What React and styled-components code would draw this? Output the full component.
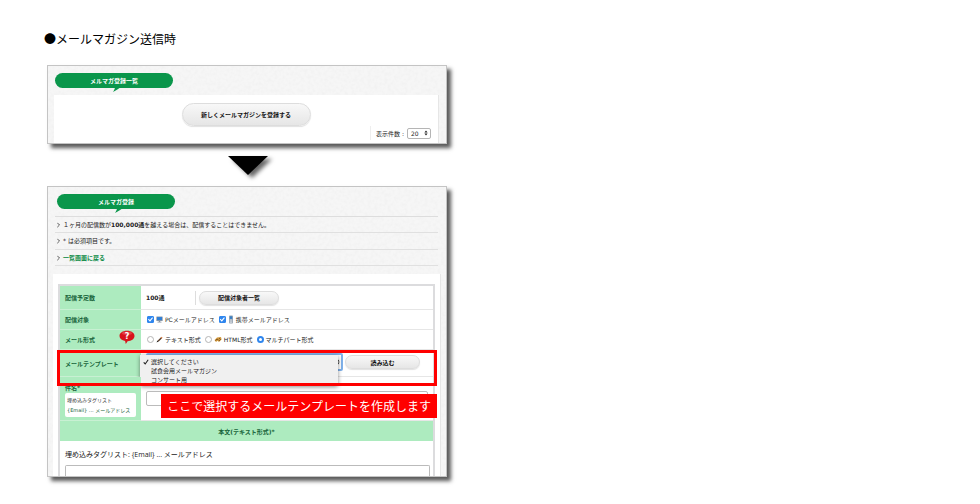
import React, { useState } from "react";
import styled, { createGlobalStyle } from "styled-components";

const menuItems = ["選択してください", "試食会用メールマガジン", "コンサート用"];

const App = () => {
  const [template, setTemplate] = useState(menuItems[0]);

  return (
    <Page>
      <GlobalStyle />
      <Title>●メールマガジン送信時</Title>

      <Panel>
        <Paper />
        <PanelBody>
          <Ribbon>
            メルマガ登録一覧
            <RibbonTail />
          </Ribbon>
          <ListCard>
            <Center>
              <PillButton size="large">
                新しくメールマガジンを登録する
              </PillButton>
            </Center>
            <PerPage>
              <label htmlFor="perPage">表示件数 :</label>
              <SelectWrapper>
                <SmallSelect id="perPage" defaultValue="20">
                  <option>20</option>
                  <option>50</option>
                </SmallSelect>
                <Stepper />
              </SelectWrapper>
            </PerPage>
          </ListCard>
        </PanelBody>
      </Panel>

      <DownArrow viewBox="0 0 40 19">
        <path d="M0 0h40L20 19z" />
      </DownArrow>

      <Panel>
        <Paper />
        <PanelBody>
          <Ribbon indent>
            メルマガ登録
            <RibbonTail />
          </Ribbon>
          <Notes>
            <Note>
              <Chevron />
              <span>
                １ヶ月の配信数が<b>100,000通</b>
                を越える場合は、配信することはできません。
              </span>
            </Note>
            <Note>
              <Chevron />
              <span>* は必須項目です。</span>
            </Note>
            <Note>
              <Chevron />
              <BackLink href="#list">一覧画面に戻る</BackLink>
            </Note>
          </Notes>

          <FormCard>
            <FormFrame>
              <FormTable>
                <tbody>
                  <Row height={24}>
                    <Head scope="row">配信予定数</Head>
                    <Cell>
                      <Line>
                        <Count>100通</Count>
                        <PillButton>配信対象者一覧</PillButton>
                      </Line>
                    </Cell>
                  </Row>
                  <Row height={20}>
                    <Head scope="row">配信対象</Head>
                    <Cell>
                      <Line>
                        <Choice>
                          <Checkbox type="checkbox" defaultChecked />
                          <MonitorIcon />
                          PCメールアドレス
                        </Choice>
                        <Choice>
                          <Checkbox type="checkbox" defaultChecked />
                          <PhoneIcon />
                          携帯メールアドレス
                        </Choice>
                      </Line>
                    </Cell>
                  </Row>
                  <Row height={20}>
                    <Head scope="row">
                      メール形式
                      <HelpIcon />
                    </Head>
                    <Cell>
                      <Line>
                        <Choice>
                          <Radio type="radio" name="format" />
                          <PencilIcon />
                          テキスト形式
                        </Choice>
                        <Choice>
                          <Radio type="radio" name="format" />
                          <HtmlIcon />
                          HTML形式
                        </Choice>
                        <Choice>
                          <Radio type="radio" name="format" defaultChecked />
                          マルチパート形式
                        </Choice>
                      </Line>
                    </Cell>
                  </Row>
                  <Row height={27}>
                    <Head scope="row">
                      <label htmlFor="template">メールテンプレート</label>
                    </Head>
                    <Cell>
                      <TemplateLine>
                        <SelectWrapper grow>
                          <TemplateSelect
                            id="template"
                            value={template}
                            onChange={(e) => setTemplate(e.target.value)}
                          >
                            {menuItems.map((item) => (
                              <option key={item}>{item}</option>
                            ))}
                          </TemplateSelect>
                          <Stepper />
                          <Menu>
                            {menuItems.map((item) => (
                              <MenuItem
                                key={item}
                                onClick={() => setTemplate(item)}
                              >
                                <Tick>{item === template && <TickIcon />}</Tick>
                                {item}
                              </MenuItem>
                            ))}
                          </Menu>
                        </SelectWrapper>
                        <PillButton size="medium">読み込む</PillButton>
                      </TemplateLine>
                      <Highlight />
                    </Cell>
                  </Row>
                  <Row height={44}>
                    <Head scope="row" top>
                      <label htmlFor="subject">件名*</label>
                      <TagBox>
                        <div>埋め込みタグリスト</div>
                        <TagName>{"{Email} ... メールアドレス"}</TagName>
                      </TagBox>
                    </Head>
                    <Cell>
                      <SubjectInput id="subject" type="text" />
                      <Callout>
                        ここで選択するメールテンプレートを作成します
                      </Callout>
                    </Cell>
                  </Row>
                  <Row height={20}>
                    <BodyHead colSpan={2}>
                      <label htmlFor="body">本文(テキスト形式)*</label>
                    </BodyHead>
                  </Row>
                </tbody>
              </FormTable>
              <BodyArea>
                <TagLine>
                  {"埋め込みタグリスト: {Email} ... メールアドレス"}
                </TagLine>
                <BodyText id="body" />
              </BodyArea>
            </FormFrame>
          </FormCard>
        </PanelBody>
      </Panel>
    </Page>
  );
};

export default App;

// icons

const RibbonTail = () => (
  <Tail viewBox="0 0 8 5" width="8" height="5">
    <path d="M2 0h6C6 1 4 3 0 5c1-2 2-3 2-5z" fill="#0a964b" />
  </Tail>
);

const Chevron = () => (
  <svg viewBox="0 0 3 6" width="3" height="6">
    <path d="M.3.8 2.5 3 .3 5.2" fill="none" stroke="#333" strokeWidth=".8" />
  </svg>
);

const MonitorIcon = () => (
  <svg viewBox="0 0 7 7" width="7" height="7">
    <rect x=".3" y=".5" width="6.4" height="4.4" rx=".5" fill="#8d99a8" />
    <rect x="1" y="1.1" width="5" height="3" fill="#2f7fd6" />
    <path d="M2.8 4.9h1.4v.9h1.3v.8h-4v-.8h1.3z" fill="#8893a1" />
  </svg>
);

const PhoneIcon = () => (
  <svg viewBox="0 0 6 9" width="6" height="9">
    <rect x="1" y=".4" width="4" height="8.2" rx=".8" fill="#9aa6b3" />
    <rect x="1.8" y="1.3" width="2.4" height="2.6" fill="#377fc5" />
    <path d="M1.8 5h2.4M1.8 6.2h2.4M1.8 7.4h2.4" stroke="#eef1f5" strokeWidth=".6" />
  </svg>
);

const PencilIcon = () => (
  <svg viewBox="0 0 7 7" width="7" height="7">
    <path d="M1 6 2 4.3 5 1.3l1 1L3 5.3z" fill="#5a3c28" />
    <path d="m4.7 1.5.8-.8 1.1 1-.8.9z" fill="#e07a3a" />
    <path d="M.5 6.5 1.4 4.6l1.1 1z" fill="#222" />
  </svg>
);

const HtmlIcon = () => (
  <svg viewBox="0 0 8 7" width="8" height="7">
    <path d="M.5 4 3 1.5l4-.5.6 2.4L5 6 3.6 4.7 2 6z" fill="#d39a3e" />
    <path d="M1.5 4.7 3 3l1.5 1M5 2l1.5 1.4L5 5" fill="none" stroke="#74491a" strokeWidth=".8" />
  </svg>
);

const TickIcon = () => (
  <svg viewBox="0 0 6 6" width="6" height="6">
    <path d="M.7 3.4 2.2 5 5.2.8" fill="none" stroke="#222" strokeWidth="1.1" />
  </svg>
);

const HelpIcon = () => (
  <Balloon viewBox="0 0 16 15" width="16" height="15">
    <path
      d="M8 .8c4.3 0 7.500 2.200 7.500 5.200S12.300 11.200 8.600 11.200L6.800 14l-.7-3C2.800 10.400.5 8.600.5 6 .5 3 3.700.8 8 .8z"
      fill="#d8141c"
    />
    <ellipse cx="8" cy="3.2" rx="5" ry="1.7" fill="#ec5a5c" opacity=".6" />
    <text x="8" y="9" textAnchor="middle">?</text>
  </Balloon>
);

const Stepper = () => (
  <StepperIcon viewBox="0 0 4 6" width="4" height="6">
    <path d="M.4 2.500 2 .4l1.600 2.100zM.4 3.500 2 5.600l1.600-2.100z" fill="#222" />
  </StepperIcon>
);

// faint paper grain behind each panel
const Paper = () => (
  <PaperSvg aria-hidden="true">
    <filter id="grain">
      <feTurbulence type="fractalNoise" baseFrequency=".3" numOctaves="2" />
      <feColorMatrix values="0 0 0 0 .5  0 0 0 0 .5  0 0 0 0 .5  .16 0 0 0 -.06" />
    </filter>
    <rect width="100%" height="100%" filter="url(#grain)" />
  </PaperSvg>
);

// styles

const GlobalStyle = createGlobalStyle`
  *, *::before, *::after {
    box-sizing: border-box;
  }
  body {
    margin: 0;
    background: #fff;
  }
  body, button, input, select, textarea {
    font-family: "DejaVu Sans", "Noto Sans CJK JP", sans-serif;
  }
  svg {
    flex: none;
  }
`;

const Page = styled.main`
  max-width: 447px;
  padding: 30px 0 24px 47px;
  color: #222;
  font-size: 6px;
  line-height: 9px;
`;

const Title = styled.h1`
  margin: 0 0 17px -3px;
  font-family: "Noto Sans CJK JP", sans-serif;
  font-size: 12px;
  font-weight: 400;
  line-height: 18px;
  color: #000;
`;

const Panel = styled.section`
  position: relative;
  border: 1px solid #c4c4c4;
  background: #f6f6f6;
  box-shadow: 4px 4px 4px rgba(0, 0, 0, 0.65);
`;

const PaperSvg = styled.svg`
  position: absolute;
  inset: 0;
  width: 100%;
  height: 100%;
`;

const PanelBody = styled.div`
  position: relative;
  padding: 7px 5px 0;
`;

const Ribbon = styled.h2`
  position: relative;
  width: 118px;
  margin: 0 0 0 ${(props) => (props.indent ? "4px" : "2px")};
  border-radius: 8px;
  background: #0a964b;
  color: #fff;
  font-size: 6px;
  font-weight: 700;
  line-height: 15px;
  text-align: center;
`;

const Tail = styled.svg`
  position: absolute;
  top: 14px;
  left: 58px;
`;

const ListCard = styled.div`
  margin: 7px 2px 0 1px;
  padding: 8px 8px 3px;
  border-right: 1px solid #e6e6e6;
  background: #fff;
`;

const Center = styled.div`
  display: flex;
  justify-content: center;
`;

const pillSizes = {
  small: { width: 80, height: 14 },
  medium: { width: 75, height: 14 },
  large: { width: 129, height: 23 },
};

const PillButton = styled.button`
  flex: none;
  width: ${({ size = "small" }) => pillSizes[size].width}px;
  height: ${({ size = "small" }) => pillSizes[size].height}px;
  padding: 0;
  border: 1px solid #ddd;
  border-radius: 12px;
  background: linear-gradient(#f8f8f8, #e6e6e6);
  box-shadow: 0 1px 1px rgba(0, 0, 0, 0.12);
  color: #111;
  font-size: 6px;
  font-weight: 700;
  line-height: 9px;
  cursor: pointer;
`;

const PerPage = styled.div`
  display: flex;
  align-items: center;
  gap: 3px;
  width: 60px;
  height: 14px;
  margin-left: auto;
  padding-left: 5px;
  border-left: 1px solid #eee;
  white-space: nowrap;
`;

const SelectWrapper = styled.div`
  position: relative;
  flex: ${(props) => (props.grow ? "1" : "none")};
`;

const SmallSelect = styled.select`
  display: block;
  width: 24px;
  height: 11px;
  padding: 0 3px;
  border: 1px solid #b5b5b5;
  border-radius: 2px;
  background: #fff;
  appearance: none;
  color: #222;
  font-size: 6px;
  line-height: 9px;
`;

const StepperIcon = styled.svg`
  position: absolute;
  top: calc(50% - 3px);
  right: 3px;
  pointer-events: none;
`;

const DownArrow = styled.svg`
  display: block;
  width: 40px;
  height: 19px;
  margin: 12px auto 11px 181px;
  overflow: visible;
  filter: drop-shadow(4px 3px 2px rgba(0, 0, 0, 0.6));
`;

const Notes = styled.ul`
  margin: 7px 3px 8px 2px;
  padding: 0;
  border-top: 1px solid #ddd;
  list-style: none;
`;

const Note = styled.li`
  display: flex;
  align-items: center;
  gap: 3px;
  padding: 3px 2px;
  border-bottom: 1px solid #e0e0e0;
  line-height: 9px;

  &:nth-child(2) {
    padding-bottom: 4px;
  }
`;

const BackLink = styled.a`
  color: #0a8a44;
  font-weight: 700;
  text-decoration: none;
`;

const FormCard = styled.div`
  padding: 10px 5px 0;
  border-right: 1px solid #e6e6e6;
  background: #fff;
`;

const FormFrame = styled.div`
  border: solid #dcdcde;
  border-width: 2px 2px 0;
`;

const FormTable = styled.table`
  width: 100%;
  border-spacing: 0;
`;

const Row = styled.tr`
  position: relative;
  height: ${(props) => props.height}px;
`;

const Head = styled.th`
  position: relative;
  width: 81px;
  padding: ${(props) => (props.top ? "6px 5px 3px" : "0 5px")};
  border-bottom: 1px solid #c8f0d3;
  background: #adebbf;
  color: #17633a;
  font-weight: 700;
  text-align: left;
  vertical-align: ${(props) => (props.top ? "top" : "middle")};
`;

const Cell = styled.td`
  padding: 0 5px;
  border-bottom: 1px solid #e6e6e6;
`;

const Line = styled.div`
  display: flex;
  align-items: center;
  gap: 3px;
`;

const TemplateLine = styled(Line)`
  gap: 2px;
  padding: 0 8px 2px 0;
`;

const Count = styled.b`
  width: 50px;
  border-right: 1px solid #ddd;
  line-height: 14px;
`;

const Choice = styled.label`
  display: flex;
  align-items: center;
  gap: 2px;
  padding-left: 1px;
  white-space: nowrap;
`;

const Checkbox = styled.input`
  position: relative;
  flex: none;
  width: 7px;
  height: 7px;
  margin: 0;
  border: 1px solid #aaa;
  border-radius: 1px;
  appearance: none;

  &:checked {
    border-color: #2f86ee;
    background: #2f86ee;
  }

  &:checked::before {
    content: "";
    display: block;
    height: 5px;
    background: #fff;
    clip-path: polygon(0 50%, 15% 35%, 38% 60%, 85% 5%, 100% 20%, 40% 95%);
  }
`;

const Radio = styled.input`
  flex: none;
  width: 7px;
  height: 7px;
  margin: 0;
  border: 1px solid #b5b5b5;
  border-radius: 50%;
  background: #fff;
  appearance: none;

  &:checked {
    border: 2px solid #2f86ee;
  }
`;

const Balloon = styled.svg`
  position: absolute;
  top: 0;
  right: 6px;

  text {
    fill: #fff;
    font-size: 8px;
    font-weight: 700;
  }
`;

const TemplateSelect = styled.select`
  display: block;
  width: 100%;
  height: 18px;
  padding: 0 5px;
  border: 2px solid #7fb1ea;
  border-radius: 2px;
  background: #fff;
  appearance: none;
  color: #222;
  font-size: 6px;
`;

const Menu = styled.ul`
  position: absolute;
  top: 2px;
  right: 5px;
  left: -6px;
  margin: 0;
  padding: 2px 0;
  border-radius: 0 0 2px 2px;
  background: #f0f0f0;
  box-shadow: 0 1px 4px rgba(0, 0, 0, 0.45);
  list-style: none;
`;

const MenuItem = styled.li`
  display: flex;
  align-items: center;
  line-height: 9px;
  cursor: default;
`;

const Tick = styled.span`
  display: flex;
  justify-content: center;
  width: 11px;
`;

const Highlight = styled.div`
  position: absolute;
  inset: 0 -4px -9px -3px;
  z-index: 1;
  border: 3px solid #f00;
  pointer-events: none;
`;

const TagBox = styled.div`
  margin-top: 1px;
  padding: 2px;
  border-radius: 2px;
  background: #fff;
  color: #333;
  font-size: 5px;
  font-weight: 400;
  line-height: 10px;
  white-space: nowrap;
`;

const TagName = styled.div`
  color: #17633a;
`;

const SubjectInput = styled.input`
  display: block;
  width: 100%;
  height: 15px;
  border: 1px solid #bbb;
  border-radius: 2px;
`;

const Callout = styled.div`
  position: absolute;
  top: 17px;
  right: -4px;
  z-index: 2;
  padding: 0 6px;
  background: #f00;
  color: #fff;
  font-family: "Noto Sans CJK JP", sans-serif;
  font-size: 12px;
  line-height: 24px;
  white-space: nowrap;
`;

const BodyHead = styled.th`
  padding: 0;
  background: #adebbf;
  color: #17633a;
  font-weight: 700;
`;

const BodyArea = styled.div`
  padding: 9px 3px 0 5px;
`;

const TagLine = styled.div`
  margin-bottom: 5px;
  font-family: "Open Sans", "Noto Sans CJK JP", sans-serif;
  font-size: 7px;
  line-height: 10px;
`;

const BodyText = styled.textarea`
  display: block;
  width: 100%;
  height: 11px;
  border: 1px solid #bbb;
  border-bottom: 0;
  border-radius: 2px 2px 0 0;
  resize: none;
`;
